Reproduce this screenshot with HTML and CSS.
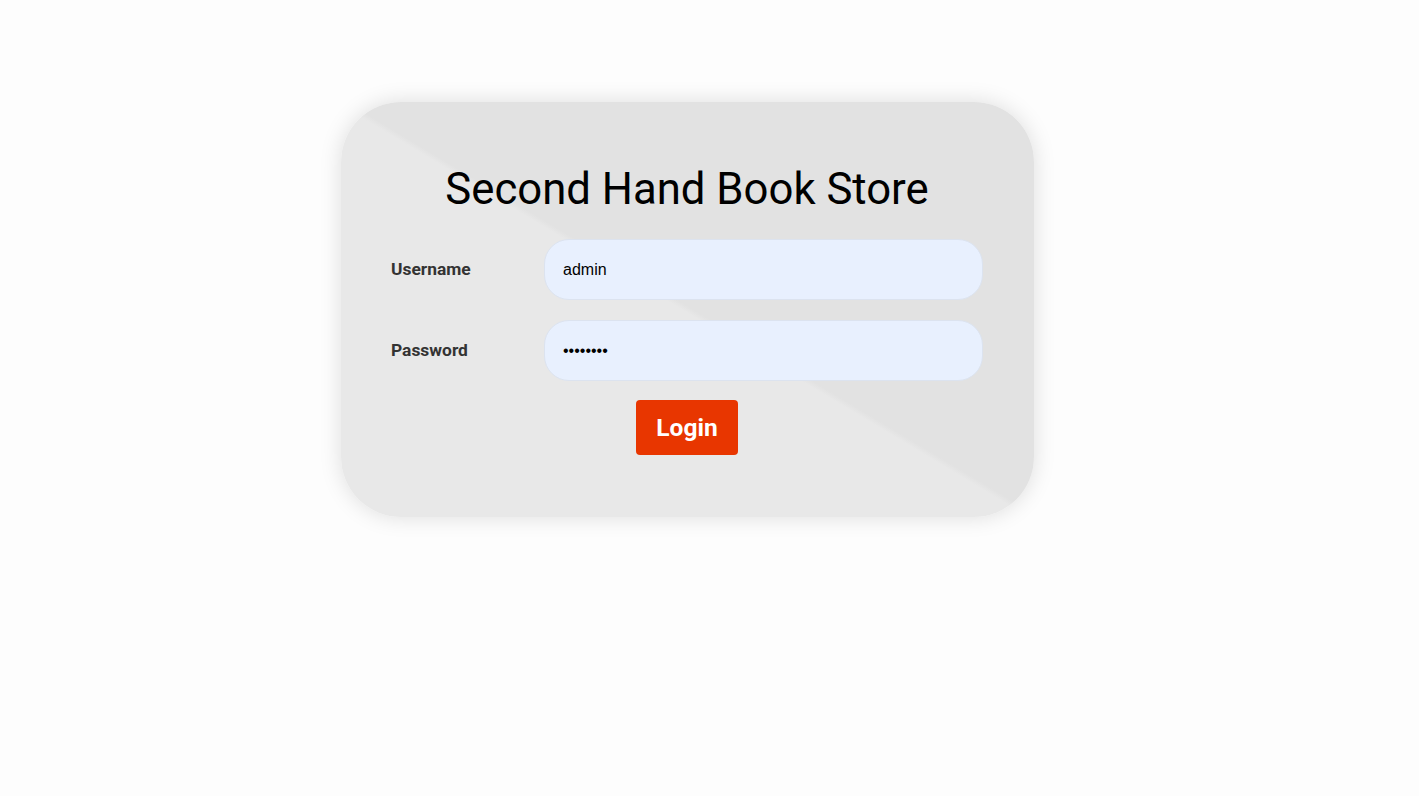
FILE: index.html
```html
<!DOCTYPE html>
<html lang="en">
<head>
<meta charset="utf-8">
<title>Second Hand Book Store</title>
<link rel="stylesheet" href="styles.css">
</head>
<body>
<main class="page">
  <form class="card" onsubmit="return false;">
    <h1 class="title">Second Hand Book Store</h1>
    <div class="fields">
      <label class="label" for="username">Username</label>
      <input class="input" id="username" type="text" value="admin">
      <label class="label" for="password">Password</label>
      <input class="input" id="password" type="password" value="password">
    </div>
    <div class="actions">
      <button class="btn" type="submit">Login</button>
    </div>
  </form>
</main>
</body>
</html>
```

FILE: styles.css
```css
* { box-sizing: border-box; }
html, body { margin: 0; padding: 0; }
body {
  background: #fdfdfd;
  font-family: Roboto, "Liberation Sans", Arial, sans-serif;
  width: 1419px;
  height: 796px;
  overflow: hidden;
}
.page {
  display: flex;
  justify-content: center;
  padding-top: 102px;
}
.card {
  width: 693px;
  height: 415px;
  margin-left: -44px;
  border-radius: 60px;
  background: linear-gradient(to top right, #e8e8e8 49.6%, #e2e2e2 50.4%);
  box-shadow: 0 0 22px rgba(0, 0, 0, 0.13);
  padding: 61px 51px 0 50px;
  display: flex;
  flex-direction: column;
}
.title {
  margin: 0;
  font-weight: 400;
  font-size: 43.7px;
  line-height: 52px;
  text-align: center;
  color: #000;
}
.fields {
  margin-top: 24px;
  display: grid;
  grid-template-columns: 153px 1fr;
  grid-auto-rows: 61px;
  row-gap: 20px;
  align-items: center;
}
.label {
  font-weight: 700;
  font-size: 17.4px;
  color: #333;
  margin-top: -2px;
}
.input {
  height: 61px;
  border: 1px solid #dce3ef;
  border-radius: 25px;
  background: #e8f0fe;
  padding: 0 18px;
  font-family: "Liberation Sans", Arial, sans-serif;
  font-size: 16px;
  color: #000;
  outline: none;
}
.actions {
  display: flex;
  justify-content: center;
  margin-top: 19px;
}
.btn {
  width: 102px;
  height: 55px;
  border: none;
  border-radius: 4px;
  background: #e83600;
  color: #fff;
  font-family: Roboto, "Liberation Sans", Arial, sans-serif;
  font-weight: 700;
  font-size: 24.5px;
  cursor: pointer;
}
```
